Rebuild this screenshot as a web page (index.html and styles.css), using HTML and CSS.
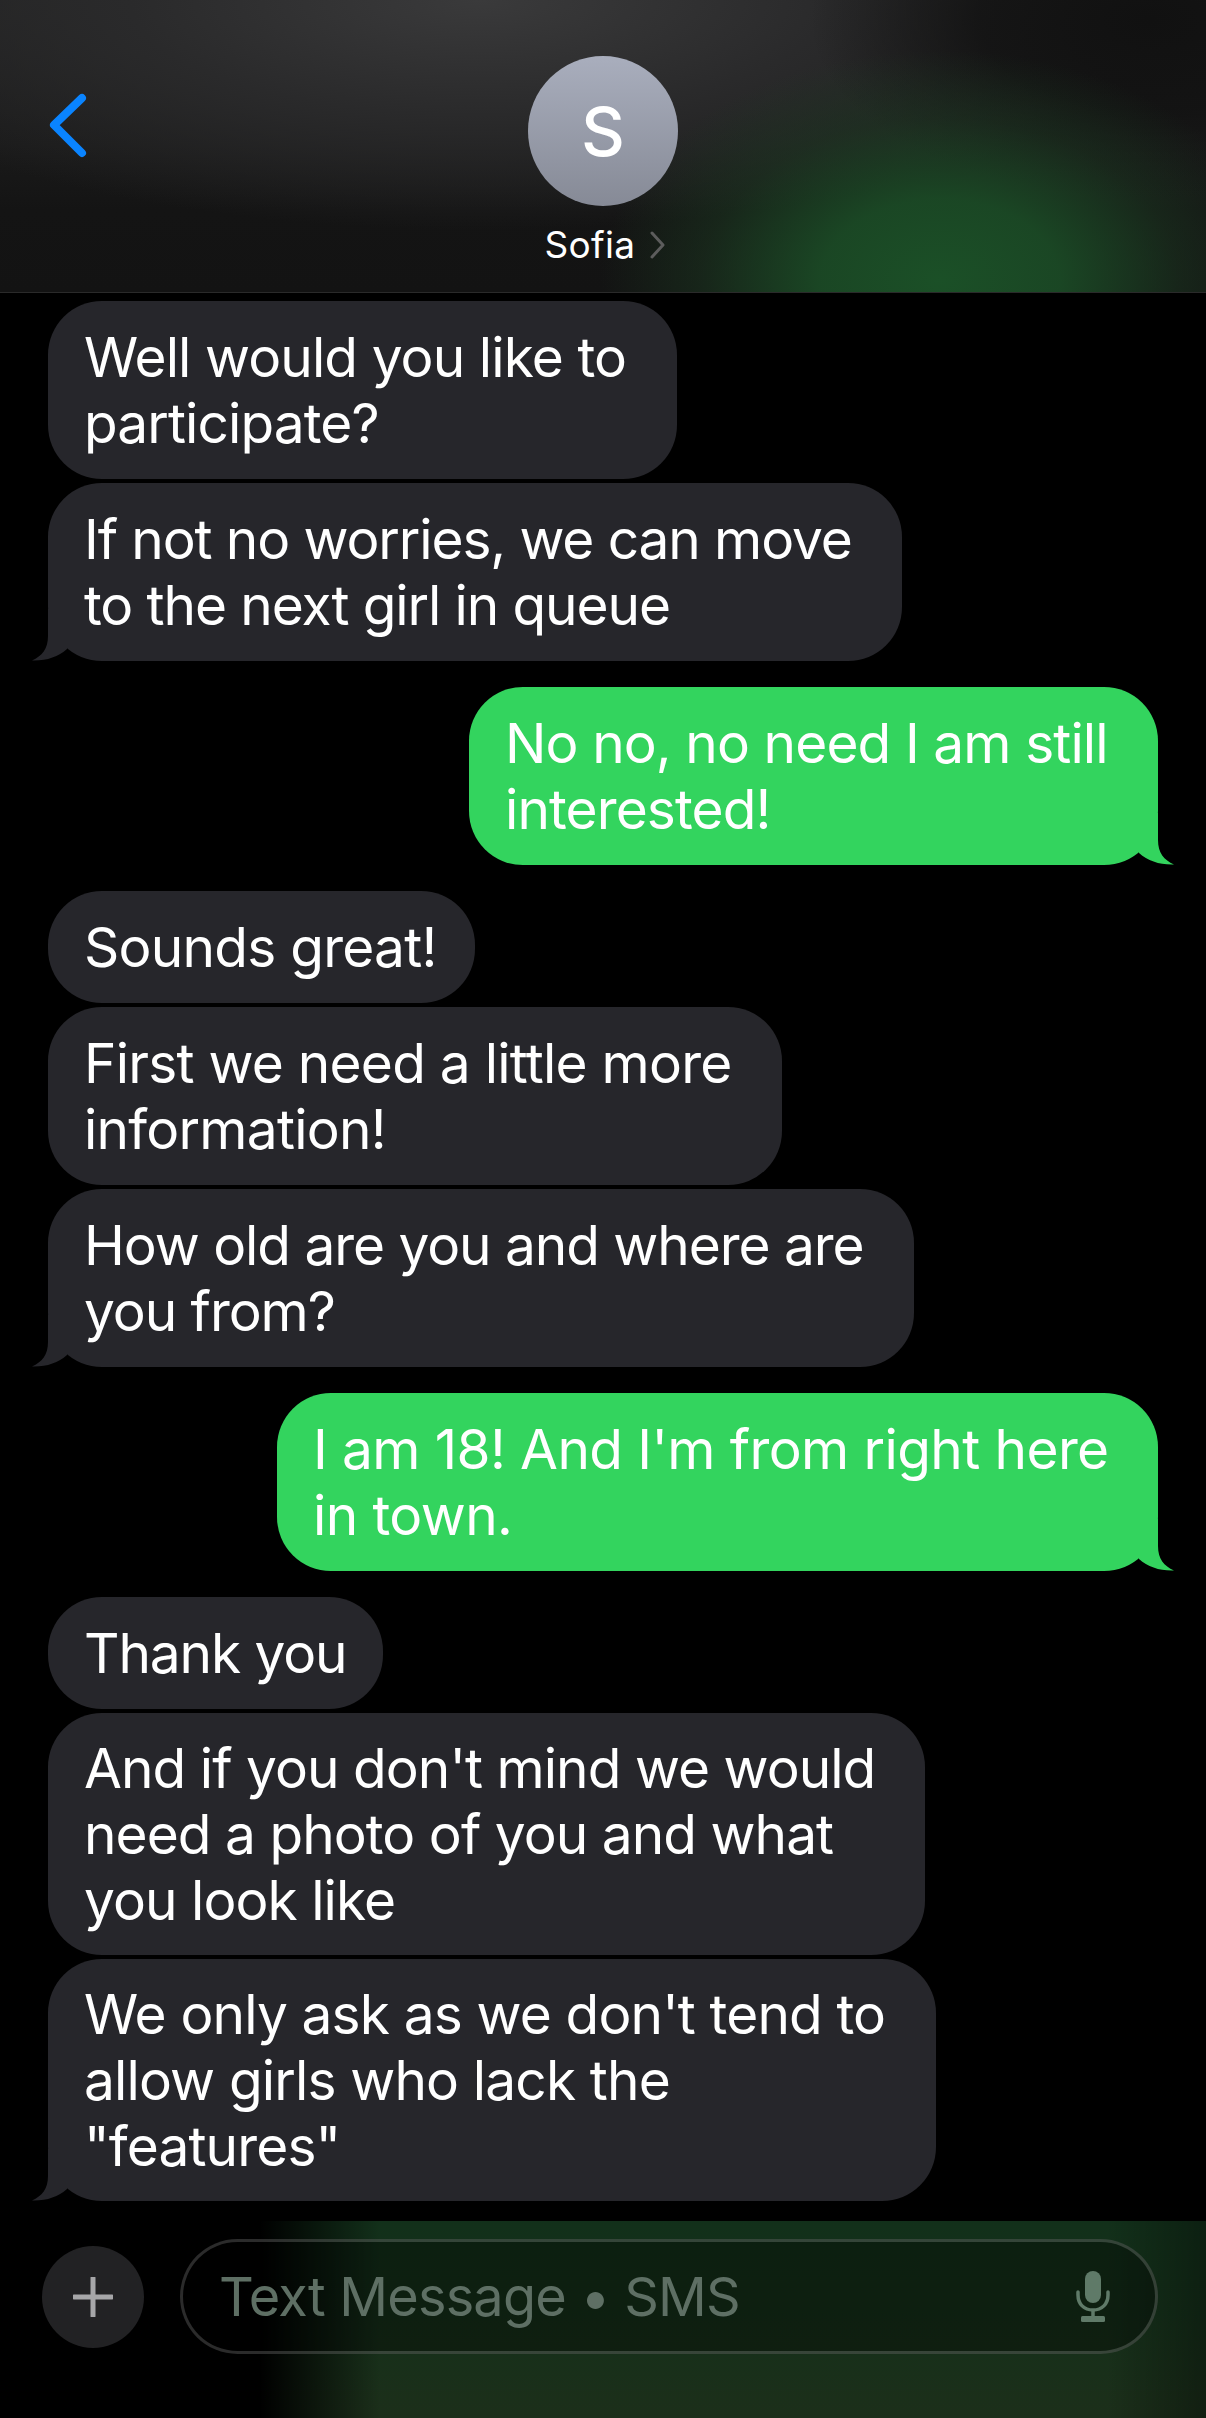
FILE: index.html
```html
<!DOCTYPE html>
<html>
  <head>
    <meta charset="utf-8" />
    <meta name="viewport" content="width=device-width, initial-scale=1.0" />
    <title>Sofia</title>
    <link rel="stylesheet" href="styles.css">
  </head>
  <body>
    <header class="topbar">
      <div class="back">
        <svg width="40" height="66" viewBox="0 0 40 66"><path d="M33 5 L5 32 L33 60" fill="none" stroke="#0a84ff" stroke-width="8" stroke-linecap="round" stroke-linejoin="round"/></svg>
      </div>
      <div class="contact">
        <div class="avatar">S</div>
        <div class="name">Sofia
          <svg width="16" height="28" viewBox="0 0 16 28"><path d="M2 2 L13 14 L2 26" fill="none" stroke="#5c5c5c" stroke-width="3" stroke-linecap="round" stroke-linejoin="round"/></svg>
        </div>
      </div>
    </header>

    <main class="thread">
      <div class="bubble in m1">Well would you like to<br />participate?</div>
      <div class="bubble in tail m2">If not no worries, we can move<br />to the next girl in queue
        <svg class="tailmark" width="40" height="60" viewBox="0 0 40 60"><path d="M16 8 L16 35 C16 48 10 55 0 59.5 C14 60 26 56 35 48 L35 8 Z"/></svg>
      </div>

      <div class="bubble out tail m3">No no, no need I am still<br />interested!
        <svg class="tailmark" width="40" height="60" viewBox="0 0 40 60"><path d="M24 8 L24 35 C24 48 30 55 40 59.5 C26 60 14 56 5 48 L5 8 Z"/></svg>
      </div>

      <div class="bubble in m4">Sounds great!</div>
      <div class="bubble in m5">First we need a little more<br />information!</div>
      <div class="bubble in tail m6">How old are you and where are<br />you from?
        <svg class="tailmark" width="40" height="60" viewBox="0 0 40 60"><path d="M16 8 L16 35 C16 48 10 55 0 59.5 C14 60 26 56 35 48 L35 8 Z"/></svg>
      </div>

      <div class="bubble out tail m7">I am 18! And I'm from right here<br />in town.
        <svg class="tailmark" width="40" height="60" viewBox="0 0 40 60"><path d="M24 8 L24 35 C24 48 30 55 40 59.5 C26 60 14 56 5 48 L5 8 Z"/></svg>
      </div>

      <div class="bubble in m8">Thank you</div>
      <div class="bubble in three m9">And if you don't mind we would<br />need a photo of you and what<br />you look like</div>
      <div class="bubble in tail three m10">We only ask as we don't tend to<br />allow girls who lack the<br />"features"
        <svg class="tailmark" width="40" height="60" viewBox="0 0 40 60"><path d="M16 8 L16 35 C16 48 10 55 0 59.5 C14 60 26 56 35 48 L35 8 Z"/></svg>
      </div>
    </main>

    <footer class="composer">
      <div class="plus">
        <svg width="40" height="40" viewBox="0 0 40 40"><path d="M20 1 V39 M1 20 H39" fill="none" stroke="#a6a6a8" stroke-width="5" stroke-linecap="round"/></svg>
      </div>
      <div class="field">
        <span class="placeholder">Text Message • SMS</span>
        <svg class="mic" width="36" height="52" viewBox="0 0 36 52"><rect x="10" y="0" width="16" height="32" rx="8" fill="#5f7a68"/><path d="M3 21 V24 C3 33 9 39 18 39 C27 39 33 33 33 24 V21" fill="none" stroke="#5f7a68" stroke-width="3.5" stroke-linecap="round"/><path d="M18 39 V47" stroke="#5f7a68" stroke-width="3.5"/><rect x="6" y="45" width="24" height="6" rx="1.5" fill="#5f7a68"/></svg>
      </div>
    </footer>
  </body>
</html>
```

FILE: styles.css
```css
html,
body {
  margin: 0;
  padding: 0;
  width: 1206px;
  height: 2418px;
  overflow: hidden;
  background: #000;
  font-family: Inter, "Liberation Sans", sans-serif;
  color: #fff;
}

body {
  display: flex;
  flex-direction: column;
}

.topbar {
  display: grid;
  grid-template-columns: 1fr auto 1fr;
  height: 292px;
  flex: none;
  border-bottom: 1px solid #2a2a2a;
  background:
    radial-gradient(ellipse 340px 230px at 940px 280px, #1b5027 0%, rgba(27, 76, 38, 0.9) 35%, rgba(28, 60, 34, 0.45) 70%, rgba(26, 50, 30, 0) 100%),
    radial-gradient(ellipse 340px 180px at 1150px 20px, #111 0%, rgba(17, 17, 17, 0.8) 50%, rgba(17, 17, 17, 0) 100%),
    radial-gradient(ellipse 700px 230px at 480px 0, #3a3a3b 0%, #2a2a2b 50%, rgba(30, 30, 30, 0) 100%),
    linear-gradient(#222 0%, #1a1a1a 50%, #141414 72%, #131313 100%);
}

.back {
  padding: 93px 0 0 49px;
}

.contact {
  display: flex;
  flex-direction: column;
  align-items: center;
  padding-top: 56px;
}

.avatar {
  width: 150px;
  height: 150px;
  border-radius: 50%;
  background: linear-gradient(#a9aebd, #868a96);
  display: flex;
  align-items: center;
  justify-content: center;
  font-size: 68px;
  font-weight: 500;
}

.name {
  display: flex;
  align-items: center;
  gap: 15px;
  margin-top: 17px;
  padding-left: 5px;
  font-size: 37px;
  line-height: 44px;
  letter-spacing: 0.3px;
}

.thread {
  flex: 1;
  display: flex;
  flex-direction: column;
  align-items: flex-start;
  padding: 4px 48px 0;
  overflow: hidden;
}

.bubble {
  position: relative;
  box-sizing: border-box;
  padding: 23px 0 23px 36px;
  margin-top: 4px;
  border-radius: 54px;
  font-size: 55px;
  line-height: 66px;
  letter-spacing: -1.1px;
  white-space: nowrap;
  background: #26262b;
}

.bubble.three {
  padding-top: 22px;
  padding-bottom: 22px;
}

.bubble.tail {
  margin-bottom: 26px;
}

.bubble.tail + .bubble {
  margin-top: 0;
}

.bubble.out {
  align-self: flex-end;
  background: #33d45e;
}

/* each message's width and tracking, the text runs a bit off SF otherwise */
.m1 { width: 629px; letter-spacing: -0.9px; }
.m2 { width: 854px; }
.m3 { width: 689px; letter-spacing: -0.9px; padding-left: 36px; }
.m4 { width: 427px; letter-spacing: -0.75px; }
.m5 { width: 734px; letter-spacing: -0.75px; }
.m6 { width: 866px; letter-spacing: -1.05px; }
.m7 { width: 881px; letter-spacing: -0.6px; padding-left: 36px; }
.m8 { width: 335px; }
.m9 { width: 877px; letter-spacing: -0.95px; }
.m10 { width: 888px; letter-spacing: -0.85px; }

.tailmark {
  position: absolute;
  bottom: 0;
}

.in .tailmark {
  left: -16px;
  fill: #26262b;
}

.out .tailmark {
  right: -16px;
  fill: #33d45e;
}

.composer {
  flex: none;
  height: 197px;
  box-sizing: border-box;
  display: flex;
  align-items: flex-start;
  gap: 36px;
  padding: 18px 48px 0 42px;
  background:
    linear-gradient(90deg, #000 260px, rgba(0, 0, 0, 0) 380px),
    linear-gradient(270deg, rgba(0, 0, 0, 0.35) 0, rgba(0, 0, 0, 0) 100px),
    linear-gradient(#12301a, #15301a 45%, #1c2f1a 100%);
}

.plus {
  width: 102px;
  height: 102px;
  margin-top: 7px;
  flex: none;
  border-radius: 50%;
  background: #222224;
  display: flex;
  align-items: center;
  justify-content: center;
}

.field {
  flex: 1;
  height: 115px;
  box-sizing: border-box;
  border: 3px solid rgba(255, 255, 255, 0.17);
  border-radius: 58px;
  background: rgba(0, 0, 0, 0.35);
  display: flex;
  align-items: center;
  justify-content: space-between;
  padding: 0 44px 0 36px;
}

.placeholder {
  font-size: 54px;
  letter-spacing: -0.8px;
  color: #5e6f64;
}
```
